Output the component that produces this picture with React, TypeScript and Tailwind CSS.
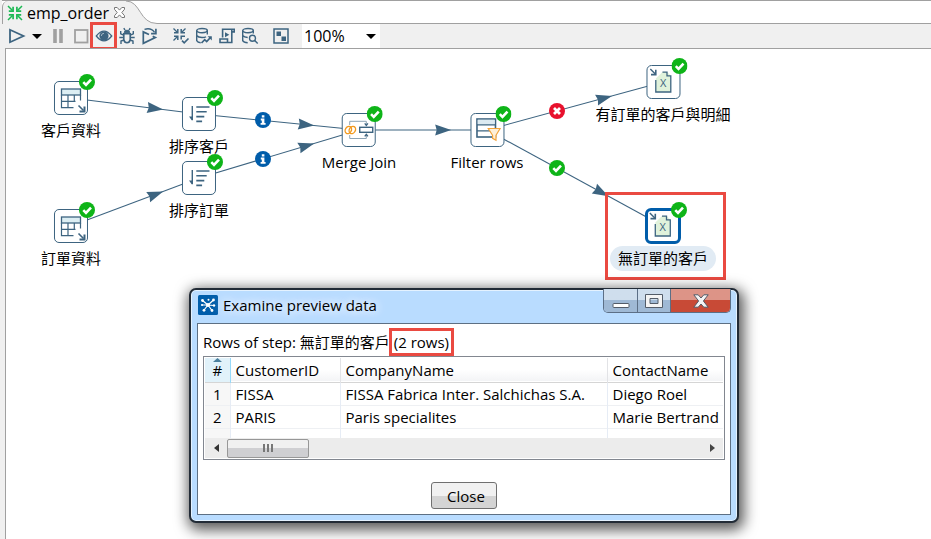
import React from "react";

type NodeKind = "table" | "sort" | "merge" | "filter" | "excel";

type StepNode = {
   id: string;
   label: string;
   kind: NodeKind;
   x: number;
   y: number;
   selected?: boolean;
};

type Hop = {
   from: string;
   to: string;
   tip: number;
   badge?: "info" | "error" | "ok";
};

// x / y are the centre of each step on the canvas
const steps: StepNode[] = [
   { id: "customers", label: "客戶資料", kind: "table", x: 65, y: 49 },
   { id: "orders", label: "訂單資料", kind: "table", x: 65, y: 177 },
   { id: "sortCustomers", label: "排序客戶", kind: "sort", x: 193, y: 65 },
   { id: "sortOrders", label: "排序訂單", kind: "sort", x: 193, y: 129 },
   { id: "merge", label: "Merge Join", kind: "merge", x: 353, y: 81 },
   { id: "filter", label: "Filter rows", kind: "filter", x: 481, y: 81 },
   { id: "withOrders", label: "有訂單的客戶與明細", kind: "excel", x: 657, y: 33 },
   { id: "noOrders", label: "無訂單的客戶", kind: "excel", x: 657, y: 177, selected: true },
];

const hops: Hop[] = [
   { from: "customers", to: "sortCustomers", tip: 0.72 },
   { from: "orders", to: "sortOrders", tip: 0.72 },
   { from: "sortCustomers", to: "merge", tip: 0.72, badge: "info" },
   { from: "sortOrders", to: "merge", tip: 0.72, badge: "info" },
   { from: "merge", to: "filter", tip: 0.72 },
   { from: "filter", to: "withOrders", tip: 0.71, badge: "error" },
   { from: "filter", to: "noOrders", tip: 0.69, badge: "ok" },
];

const rows = [
   ["1", "FISSA", "FISSA Fabrica Inter. Salchichas S.A.", "Diego Roel"],
   ["2", "PARIS", "Paris specialites", "Marie Bertrand"],
];

const findStep = (id: string) => steps.find((s) => s.id === id) as StepNode;

const Badge = ({ type }: { type: "info" | "error" | "ok" }) => (
   <svg width="16" height="16" viewBox="0 0 16 16" className="block">
      {type === "ok" && (
         <>
            <circle cx="8" cy="8" r="8" fill="#0eb418" />
            <path d="M4.3 8.2l2.7 2.7 5-5.3" fill="none" stroke="#fff" strokeWidth="2.6" />
         </>
      )}
      {type === "error" && (
         <>
            <circle cx="8" cy="8" r="8" fill="#e8112d" />
            <path d="M5 5l6 6M11 5l-6 6" fill="none" stroke="#fff" strokeWidth="2.8" />
         </>
      )}
      {type === "info" && (
         <>
            <circle cx="8" cy="8" r="8" fill="#005daa" />
            <path d="M6.8 3.2h2.6v2.2H6.8zM5.8 6.6h3.6v4.4h1.2v1.8H5.6V11h1.2V8.4h-1z" fill="#fff" />
         </>
      )}
   </svg>
);

const StepIcon = ({ kind }: { kind: NodeKind }) => (
   <svg width="34" height="34" viewBox="0 0 34 34" fill="none" stroke="#3d6480" className="block">
      {kind === "table" && (
         <>
            <rect x="7.5" y="8" width="19" height="6" fill="#dceef3" strokeWidth="1.3" />
            <path d="M7.5 14v12.7h12M14 14v12.5M20.3 14v7M26.5 14v5.5M7.5 20.3h14" strokeWidth="1.2" />
            <path d="M24.5 24.5l5 5" strokeWidth="1.6" />
            <path d="M30.5 25.5v5h-5" strokeWidth="2" />
         </>
      )}
      {kind === "sort" && (
         <>
            <path d="M10.3 9v14" strokeWidth="1.4" />
            <path d="M7 19.5h3.3V24z" fill="#3d6480" stroke="none" />
            <path d="M14.3 10h13.2M14.3 14.8h10.4M14.3 19.6h8M14.3 24.4h5.8" strokeWidth="1.6" />
         </>
      )}
      {kind === "merge" && (
         <>
            <path d="M8 12V8.3h16.6v3.5M8 22v3.5h16.6v-3.7" stroke="#8da4b5" />
            <path d="M23 10.4l1.6 2 1.6-2M23 23.4l1.6-2 1.6 2" strokeWidth="1.3" />
            <rect x="18" y="14.3" width="13" height="5" strokeWidth="1.4" />
            <g stroke="#f29a1f" strokeWidth="1.4">
               <ellipse cx="6.6" cy="17" rx="3" ry="3.8" transform="rotate(30 6.6 17)" />
               <ellipse cx="10.6" cy="17" rx="3" ry="3.8" transform="rotate(30 10.6 17)" />
            </g>
         </>
      )}
      {kind === "filter" && (
         <>
            <rect x="6.5" y="6" width="18.5" height="18" fill="#fff" strokeWidth="1.6" />
            <path d="M7.2 6.8h17v4.7h-17z" fill="#dceaf1" stroke="none" />
            <path d="M6.5 11.8H25M6.5 17.8H25" strokeWidth="1.2" />
            <path d="M17.8 15.5h11.8l-4.1 6.8v5l-3.4-2v-3z" fill="#fef0d8" stroke="#f2a33a" strokeWidth="1.2" />
         </>
      )}
      {kind === "excel" && (
         <>
            <path d="M9.3 27V13.5L16 7h4.7l3.6 3.6V27z" fill="#e0f2db" stroke="none" />
            <path d="M9.3 15v12h15V10.8h-3.8V7.2H16" strokeWidth="1.3" />
            <text x="16.8" y="21.5" textAnchor="middle" fontSize="11" fill="#3d6480" stroke="none">
               X
            </text>
            <path d="M3.8 4l5 5" strokeWidth="1.4" />
            <path d="M9.3 4.8v4.8H4.5" strokeWidth="1.6" />
         </>
      )}
   </svg>
);

const HopLines = () => (
   <svg className="absolute left-0 top-0" width="740" height="240" viewBox="0 0 740 240">
      {hops.map((hop) => {
         const a = findStep(hop.from);
         const b = findStep(hop.to);
         const x = a.x + (b.x - a.x) * hop.tip;
         const y = a.y + (b.y - a.y) * hop.tip;
         const angle = (Math.atan2(b.y - a.y, b.x - a.x) * 180) / Math.PI;
         return (
            <g key={hop.from + hop.to}>
               <line x1={a.x} y1={a.y} x2={b.x} y2={b.y} stroke="#3d6480" strokeWidth="1.1" />
               <path
                  d="M0 0L-16 -5.5L-14.5 0L-16 5.5Z"
                  fill="#3d6480"
                  transform={`translate(${x} ${y}) rotate(${angle})`}
               />
            </g>
         );
      })}
   </svg>
);

const ToolButton = ({
   label,
   children,
   color = "text-[#3d6480]",
}: {
   label: string;
   children: React.ReactNode;
   color?: string;
}) => (
   <button aria-label={label} className={`relative w-[23px] h-6 grid place-content-center ${color}`}>
      <svg width="18" height="18" viewBox="0 0 18 18" fill="none" stroke="currentColor" strokeWidth="1.8">
         {children}
      </svg>
   </button>
);

const InwardArrows = () => (
   <>
      <path d="M1 1l4.5 4.5M15 1l-4.5 4.5M1 15l4.5-4.5M15 15l-4.5-4.5" strokeWidth="1.5" />
      <path d="M6.1 1.8v4.3H1.8M9.9 1.8v4.3h4.3M6.1 14.2V9.9H1.8M9.9 14.2V9.9h4.3" strokeWidth="1.7" />
   </>
);

const Toolbar = () => (
   <div className="flex items-center h-6 pl-[3px]">
      <ToolButton label="Run">
         <path d="M2 2.8v12.4L15.5 9z" />
      </ToolButton>
      <button aria-label="Run options" className="w-[18px] h-6 grid place-content-center">
         <svg width="10" height="5" viewBox="0 0 10 5">
            <path d="M0 0h10L5 5z" />
         </svg>
      </button>
      <ToolButton label="Pause" color="text-[#a0a0a0]">
         <path d="M6 2v14M12 2v14" strokeWidth="3.6" />
      </ToolButton>
      <ToolButton label="Stop" color="text-[#a0a0a0]">
         <rect x="3" y="3" width="12.5" height="12.5" />
      </ToolButton>
      <div className="relative">
         <ToolButton label="Preview">
            <path d="M1.3 9Q9 -0.8 16.7 9Q9 18.8 1.3 9z" strokeWidth="1.3" />
            <circle cx="9" cy="9" r="4.6" fill="currentColor" stroke="none" />
            <path d="M9 6.3A2.7 2.7 0 0 0 6.3 9" stroke="#9fb4c2" strokeWidth="1" />
         </ToolButton>
         <span className="absolute -inset-0.5 border-3 border-[#ea4a41] pointer-events-none" />
      </div>
      <ToolButton label="Debug">
         <path d="M5.8 6.8h6.4v5.7q-.6 3.2-3.2 3.2t-3.2-3.2z" strokeWidth="1.6" />
         <path d="M6.2 5.6Q6.4 3.2 9 3.2t2.8 2.4z" fill="currentColor" strokeWidth="1" />
         <path d="M5.8 1.2L7 3.2M12.2 1.2L11 3.2M5.5 8L2.7 6.8V4M12.5 8l2.8-1.2V4M5.5 10.5H1.3M12.5 10.5h4.2M6 13l-3 1v3M12 13l3 1v3" strokeWidth="1.4" />
      </ToolButton>
      <ToolButton label="Replay">
         <path d="M8 7.5L2.3 4.9v11.4l12-5.9-2.6-1.2" strokeWidth="1.7" />
         <path d="M3.5 2.4Q10 .4 13.6 5.4" strokeWidth="1.5" />
         <path d="M14.9 1.8v4.8h-4.8" strokeWidth="1.7" />
      </ToolButton>
      <div className="flex ml-2">
         <ToolButton label="Verify">
            <g strokeWidth="1.3">
               <path d="M1.5 1.5l4 4M13.5 1.5l-4 4M1.5 13.5l4-4" />
               <path d="M5.8 2v3.8H2M9.2 2v3.8H13M5.8 13V9.2H2M9.2 12.5V9.2H13" strokeWidth="1.5" />
               <path d="M10 13.6l2.2 2.2 4.3-4.3" strokeWidth="1.6" />
            </g>
         </ToolButton>
         <ToolButton label="Impact">
            <g strokeWidth="1.4">
               <ellipse cx="7" cy="3.6" rx="5.3" ry="2.1" />
               <path d="M1.7 3.6v10q1 2 4 2.1M12.3 3.6v4M1.7 8.5q1.5 2 5.3 2 3 0 4-.8" />
               <path d="M6.5 16l3.2-3.4 2 2 4-4.4" strokeWidth="1.7" />
               <path d="M12.6 9.2h4.2v4.2z" fill="currentColor" stroke="none" />
            </g>
         </ToolButton>
         <ToolButton label="Script">
            <path d="M4.6 10.5V2.3h11.6v2.6h-2.4v10.6H2V12h7.5v3.3M13.8 5V2.5" strokeWidth="1.6" />
            <path d="M7 5.3v5L11.3 7.8z" fill="currentColor" stroke="none" />
         </ToolButton>
         <ToolButton label="Explore database">
            <g strokeWidth="1.4">
               <ellipse cx="7" cy="3.6" rx="5.3" ry="2.1" />
               <path d="M1.7 3.6v10q1 2 5 2.1M12.3 3.6v3M1.7 8.5q1.5 1.8 5 2" />
               <circle cx="11.5" cy="11.2" r="3" />
               <path d="M13.7 13.4l3 3" />
            </g>
         </ToolButton>
      </div>
      <div className="ml-2">
         <ToolButton label="Show results">
            <rect x="2" y="2" width="14" height="14" strokeWidth="1.5" />
            <path d="M4.5 4.5h4.5v4.5h-4.5zM9.5 9.5h4.5v4.5h-4.5z" fill="currentColor" stroke="none" />
         </ToolButton>
      </div>
      <div className="relative ml-2.5">
         <select aria-label="Zoom" className="appearance-none block w-[78px] h-6 pl-0.5 bg-white text-base leading-6">
            <option>100%</option>
         </select>
         <svg className="absolute right-1 top-2.5 pointer-events-none" width="10" height="5" viewBox="0 0 10 5">
            <path d="M0 0h10L5 5z" />
         </svg>
      </div>
   </div>
);

const TabStrip = () => (
   <div className="flex h-6 bg-white border-t border-[#a0a0a0]">
      <div className="flex items-center gap-1 h-full pl-1 rounded-tl-md border-l border-[#a0a0a0] bg-[#f0f0f0]">
         <svg width="16" height="16" viewBox="0 0 16 16" fill="none" stroke="#1db954">
            <InwardArrows />
         </svg>
         <span className="text-base leading-6 w-[82px] whitespace-nowrap">emp_order</span>
         <button aria-label="Close tab">
            <svg width="13" height="13" viewBox="0 0 13 13" fill="#fff" stroke="#777">
               <path d="M1.5 1.5h2.7l2.3 2.6 2.3-2.6h2.7v1.8L8.8 6.5l2.7 3.2v1.8H8.8L6.5 8.9l-2.3 2.6H1.5V9.7l2.7-3.2-2.7-3.2z" />
            </svg>
         </button>
      </div>
      <svg width="31" height="23" viewBox="0 0 31 23">
         <path d="M0 0C15 0 13 22.5 31 22.5V23H0z" fill="#f0f0f0" />
         <path d="M0 0C15 0 13 22.5 31 22.5" fill="none" stroke="#a0a0a0" />
      </svg>
      <div className="flex-1 border-b border-[#a0a0a0]" />
   </div>
);

const Step = ({ step }: { step: StepNode }) => (
   <div
      className="absolute flex flex-col items-center -translate-x-1/2"
      style={{ left: step.x, top: step.y - 18 }}
   >
      <div className="relative">
         <div
            className={
               step.selected
                  ? "size-9 grid place-content-center rounded-md bg-white border-3 border-[#005daa]"
                  : "size-9 grid place-content-center"
            }
         >
            <div
               className={
                  step.selected
                     ? "size-[34px]"
                     : "size-[34px] grid place-content-center rounded-[5px] bg-white border border-[#3d6480]"
               }
            >
               <StepIcon kind={step.kind} />
            </div>
         </div>
         <span className="absolute -right-1.5 -top-1.5">
            <Badge type="ok" />
         </span>
      </div>
      <span
         className={
            step.selected
               ? "mt-0.5 px-2 h-[25px] rounded-full bg-[#e1ebf4] text-[15px] leading-[25px] whitespace-nowrap"
               : "mt-0.5 px-2 h-[25px] text-[15px] leading-[25px] whitespace-nowrap"
         }
      >
         {step.label}
      </span>
   </div>
);

const WindowButtons = () => (
   <div className="flex h-6 rounded-b-[5px] border border-t-0 border-[#5c6f86] overflow-hidden">
      <button
         aria-label="Minimize"
         className="w-[34px] grid place-content-center border-r border-[#5c6f86] bg-linear-to-b from-[#cfdeed] from-50% to-[#9fb9d5] to-50%"
      >
         <svg width="18" height="16" viewBox="0 0 18 16">
            <rect x="1" y="10.5" width="16" height="4" rx="1" fill="#fff" stroke="#535c68" />
         </svg>
      </button>
      <button
         aria-label="Maximize"
         className="w-[33px] grid place-content-center border-r border-[#5c6f86] bg-linear-to-b from-[#cfdeed] from-50% to-[#9fb9d5] to-50%"
      >
         <svg width="18" height="14" viewBox="0 0 18 14">
            <path
               d="M.5 .5h17v13H.5zM5 4.5v5h8v-5z"
               fill="#f4f4f4"
               fillRule="evenodd"
               stroke="#535c68"
            />
         </svg>
      </button>
      <button
         aria-label="Close window"
         className="w-[59px] grid place-content-center bg-linear-to-b from-[#dd9487] from-50% to-[#c84a36] to-50%"
      >
         <svg width="16" height="14" viewBox="0 0 16 14">
            <path
               d="M.8 .8h4.4L8 4l2.8-3.2h4.4L10.4 7l4.8 6.2h-4.4L8 10l-2.8 3.2H.8L5.6 7z"
               fill="#f4f4f4"
               stroke="#535c68"
            />
         </svg>
      </button>
   </div>
);

const PreviewDialog = () => (
   <div
      role="dialog"
      aria-label="Examine preview data"
      className="absolute left-[183px] top-[239px] w-[550px] rounded-[7px] border-2 border-[#222b36] bg-[#b9dcff] px-1.5 pb-1.5 shadow-[2px_4px_14px_3px_rgba(0,0,0,0.65),inset_0_0_0_1px_#e4f2ff]"
   >
      <div className="flex items-start justify-between h-[34px] -mt-px">
         <div className="flex items-center gap-[5px] h-8 pl-px">
            <svg width="20" height="20" viewBox="0 0 20 20">
               <rect width="20" height="20" rx="1.5" fill="#005daa" />
               <g stroke="#fff" strokeWidth="1.2">
                  <path d="M10 10L4.5 5.5M10 10l5.5-5M10 10l6 .5M10 10l4 5.5M10 10l-4 5M10 10l-6 0" />
               </g>
               <g fill="#fff">
                  <circle cx="10" cy="10" r="2" />
                  <circle cx="4.5" cy="5.5" r="1.4" />
                  <circle cx="15.5" cy="5" r="1.4" />
                  <circle cx="16" cy="10.5" r="1.2" />
                  <circle cx="14" cy="15.5" r="1.4" />
                  <circle cx="6" cy="15.3" r="1.4" />
                  <circle cx="4" cy="10" r="1.1" />
                  <circle cx="10.5" cy="4.8" r="1" />
               </g>
            </svg>
            <h2 className="text-[15px] [text-shadow:0_0_8px_#fff,0_0_12px_#fff]">Examine preview data</h2>
         </div>
         <WindowButtons />
      </div>

      <div className="bg-white border border-[#5d6f83] px-[5px] pt-[5px] pb-[5px]">
         <p className="h-[27px] text-[15px] leading-[26px] whitespace-nowrap">
            Rows of step: 無訂單的客戶{" "}
            <span className="relative">
               (2 rows)
               <span className="absolute -inset-x-[5px] -inset-y-1 border-3 border-[#ea4a41]" />
            </span>
         </p>
         <div className="border border-[#828790] p-px">
            <div className="h-20 overflow-hidden">
               <table className="w-full table-fixed border-collapse text-[15px] text-left whitespace-nowrap">
                  <colgroup>
                     <col className="w-[25px]" />
                     <col className="w-[110px]" />
                     <col className="w-[267px]" />
                     <col />
                  </colgroup>
                  <thead>
                     <tr className="h-6 border-b border-[#d5d5d5] bg-linear-to-b from-white from-50% to-[#f3f4f6]">
                        <th className="relative p-0 text-center font-normal border-r border-[#96d9f9] bg-[#e1f2fa]">
                           <svg className="absolute left-2 top-0" width="9" height="4" viewBox="0 0 9 4">
                              <path d="M0 4L4.5 0L9 4z" fill="#4a7f9d" />
                           </svg>
                           #
                        </th>
                        <th className="p-0 pl-[5px] font-normal border-r border-[#e2e3e6]">CustomerID</th>
                        <th className="p-0 pl-[5px] font-normal border-r border-[#e2e3e6]">CompanyName</th>
                        <th className="p-0 pl-[5px] font-normal">ContactName</th>
                     </tr>
                  </thead>
                  <tbody>
                     {rows.map((row) => (
                        <tr key={row[0]} className="h-[23px] leading-[22px] border-b border-[#eef0f3]">
                           <td className="p-0 text-center bg-[#f7f7f7] border-r border-[#e6ecf5]">{row[0]}</td>
                           <td className="p-0 pl-[5px] border-r border-[#e6ecf5]">{row[1]}</td>
                           <td className="p-0 pl-[5px] border-r border-[#e6ecf5]">{row[2]}</td>
                           <td className="p-0 pl-[5px]">{row[3]}</td>
                        </tr>
                     ))}
                     <tr className="h-[23px]">
                        <td className="bg-[#f7f7f7] border-r border-[#e6ecf5]" />
                        <td className="border-r border-[#e6ecf5]" />
                        <td className="border-r border-[#e6ecf5]" />
                        <td />
                     </tr>
                  </tbody>
               </table>
            </div>
            <div className="flex items-center h-5 bg-[#ececec]">
               <button aria-label="Scroll left" className="w-[22px] h-5 grid place-content-center">
                  <svg width="5" height="8" viewBox="0 0 5 8">
                     <path d="M5 0v8L0 4z" fill="#333" />
                  </svg>
               </button>
               <div className="w-[82px] h-[19px] flex items-center justify-center gap-0.5 rounded-xs border border-[#979797] bg-linear-to-b from-[#f0f0f0] from-50% to-[#cfcfd2] to-50%">
                  <span className="w-0.5 h-2 bg-[#777]" />
                  <span className="w-0.5 h-2 bg-[#777]" />
                  <span className="w-0.5 h-2 bg-[#777]" />
               </div>
               <div className="flex-1" />
               <button aria-label="Scroll right" className="w-[22px] h-5 grid place-content-center">
                  <svg width="5" height="8" viewBox="0 0 5 8">
                     <path d="M0 0v8l5-4z" fill="#444" />
                  </svg>
               </button>
            </div>
         </div>
         <div className="flex justify-center mt-[22px]">
            <button className="w-[66px] h-[27px] pl-1 rounded-[3px] border border-[#707070] bg-linear-to-b from-[#f1f1f1] from-50% to-[#d4d4d4] to-50% text-[15px] leading-6">
               Close
            </button>
         </div>
      </div>
   </div>
);

const App = () => {
   return (
      <div className="min-h-screen flex flex-col overflow-hidden bg-[#f0f0f0] font-['Open_Sans','Noto_Sans_CJK_TC',sans-serif] text-black">
         <div className="flex-1 flex flex-col ml-0.5">
            <TabStrip />
            <Toolbar />
            <main className="relative flex-1 ml-[3px] bg-white border-l border-t border-[#a0a0a0] overflow-hidden">
               <HopLines />
               {steps.map((step) => (
                  <Step key={step.id} step={step} />
               ))}
               {hops.map((hop) => {
                  if (!hop.badge) return null;
                  const a = findStep(hop.from);
                  const b = findStep(hop.to);
                  return (
                     <span
                        key={hop.from + hop.to}
                        className="absolute -translate-1/2"
                        style={{ left: a.x + (b.x - a.x) * 0.4, top: a.y + (b.y - a.y) * 0.4 }}
                     >
                        <Badge type={hop.badge} />
                     </span>
                  );
               })}
               <div className="absolute left-[599px] top-[143px] w-[121px] h-[88px] border-3 border-[#ea4a41]" />
               <PreviewDialog />
            </main>
         </div>
      </div>
   );
};

export default App;
